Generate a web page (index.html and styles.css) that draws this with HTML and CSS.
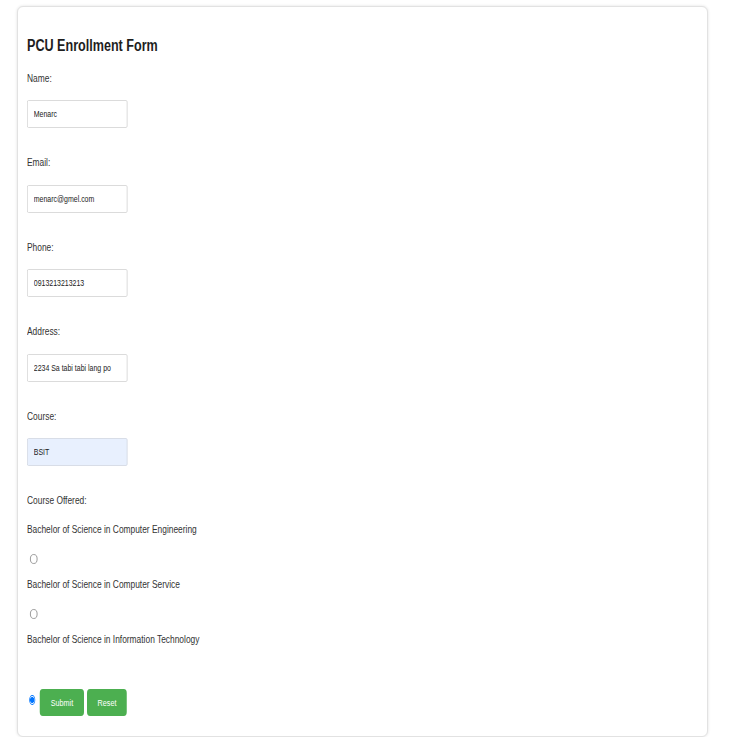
FILE: index.html
```html
<!DOCTYPE html>
<html lang="en">
<head>
<meta charset="utf-8">
<title>PCU Enrollment Form</title>
<link rel="stylesheet" href="styles.css">
</head>
<body>
<div class="card">
  <form class="form">
    <h2 class="title">PCU Enrollment Form</h2>

    <label class="label" for="name">Name:</label>
    <input class="field" id="name" type="text" value="Menarc">

    <label class="label" for="email">Email:</label>
    <input class="field" id="email" type="text" value="menarc@gmel.com">

    <label class="label" for="phone">Phone:</label>
    <input class="field" id="phone" type="text" value="0913213213213">

    <label class="label" for="address">Address:</label>
    <input class="field" id="address" type="text" value="2234 Sa tabi tabi lang po">

    <label class="label" for="course">Course:</label>
    <input class="field field-filled" id="course" type="text" value="BSIT">

    <label class="label label-heading">Course Offered:</label>

    <label class="label label-option" for="c1">Bachelor of Science in Computer Engineering</label>
    <input class="radio" id="c1" type="radio" name="offered">

    <label class="label label-option" for="c2">Bachelor of Science in Computer Service</label>
    <input class="radio" id="c2" type="radio" name="offered">

    <label class="label label-option" for="c3">Bachelor of Science in Information Technology</label>

    <div class="actions">
      <input class="radio radio-inline" id="c3" type="radio" name="offered" checked>
      <button class="btn" type="button">Submit</button>
      <button class="btn" type="reset">Reset</button>
    </div>
  </form>
</div>
</body>
</html>
```

FILE: styles.css
```css
html, body {
  margin: 0;
  padding: 0;
  background: #ffffff;
}

body {
  font-family: "Liberation Sans", Arial, sans-serif;
  color: #333333;
}

.card {
  box-sizing: border-box;
  width: 691px;
  height: 731px;
  margin: 6px 0 0 17px;
  padding: 29px 9px 0 9px;
  border: 1px solid #e2e2e2;
  border-radius: 6px;
  box-shadow: 0 0 3px rgba(0, 0, 0, 0.12);
  background: #ffffff;
  overflow: hidden;
}

.form {
  width: 880px;
  transform: scaleX(0.75);
  transform-origin: 0 0;
}

.title {
  margin: 0 0 14.5px 0;
  font-size: 16.8px;
  line-height: 20px;
  font-weight: bold;
  color: #1e1e1e;
}

.label {
  display: block;
  font-size: 11.2px;
  line-height: 14px;
  margin: 0 0 15.5px 0;
  color: #333333;
}

.label-heading {
  margin-bottom: 15px;
}

.label-option {
  margin-bottom: 17.5px;
}

.field {
  display: block;
  box-sizing: border-box;
  width: 134px;
  height: 28px;
  margin: 0 0 27px 0;
  padding: 0 8px;
  border: 1px solid #d6d6d6;
  border-radius: 2px;
  font-family: "Liberation Sans", Arial, sans-serif;
  font-size: 9.3px;
  color: #222222;
  background: #ffffff;
  outline: none;
}

.field-filled {
  background: #e8f0fe;
  border-color: #d3d9e3;
}

.radio {
  display: block;
  appearance: none;
  -webkit-appearance: none;
  box-sizing: border-box;
  width: 10px;
  height: 10px;
  margin: 0 0 13.5px 4px;
  border: 1px solid #8f8f8f;
  border-radius: 50%;
  background: #ffffff;
}

.radio:checked {
  border-color: #0075ff;
  background: radial-gradient(circle, #0075ff 0 2.6px, #ffffff 3.2px);
}

.actions {
  display: flex;
  align-items: flex-start;
  gap: 4px;
  margin-top: 42.5px;
}

.radio-inline {
  width: 8px;
  margin: 6px 2.7px 0 2.7px;
  flex: none;
}

.btn {
  height: 27px;
  padding: 0 14.3px;
  border: none;
  border-radius: 4px;
  background: #4caf50;
  color: #ffffff;
  font-family: "Liberation Sans", Arial, sans-serif;
  font-size: 9.6px;
  cursor: pointer;
}
```
